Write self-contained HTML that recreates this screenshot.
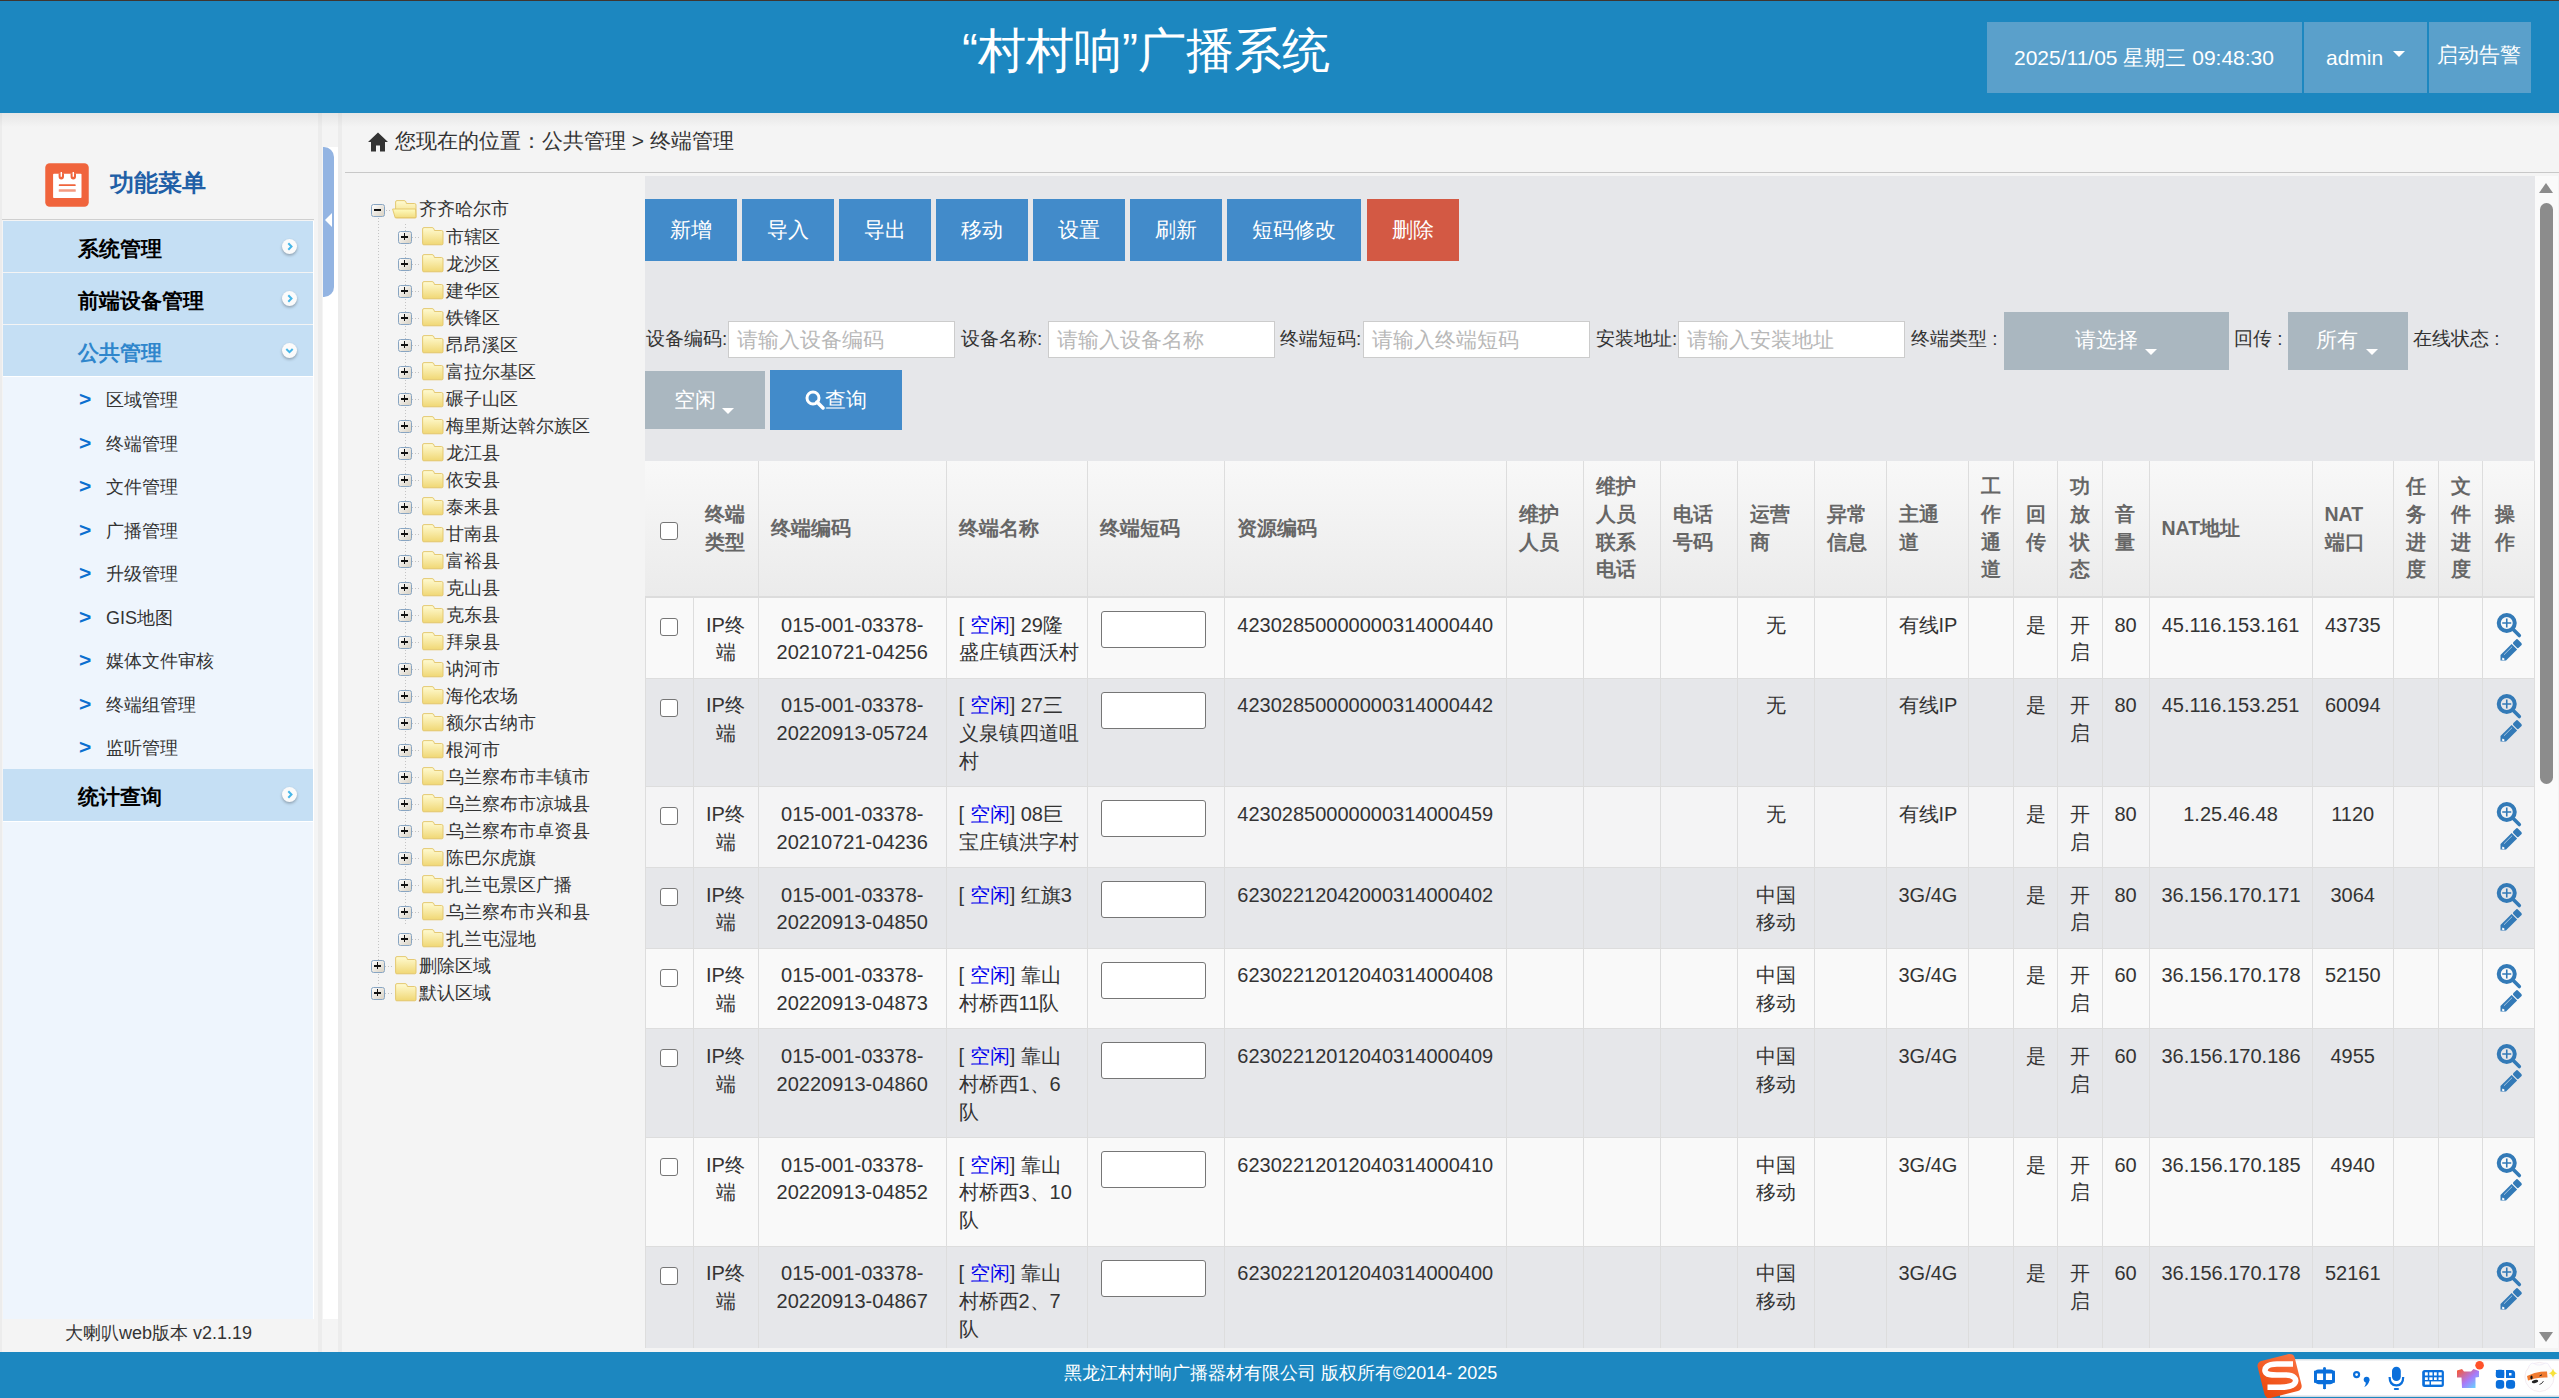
<!DOCTYPE html><html><head><meta charset="utf-8"><style>
*{box-sizing:border-box;margin:0;padding:0}
html,body{width:2559px;height:1398px;overflow:hidden}
body{position:relative;background:#f4f4f4;font-family:"Liberation Sans", sans-serif;color:#333}
.a{position:absolute}
.t{position:absolute;white-space:nowrap}
.mi{position:absolute;left:3px;width:310px;height:51px;background:#c5dff4}
.mi span{position:absolute;left:75px;top:13.5px;font-size:21px;font-weight:bold;color:#000;line-height:27px}
.arr{position:absolute;left:278.5px;top:17.5px;width:15px;height:15px;border-radius:50%;background:#fbfbfb;box-shadow:0 1.5px 3px rgba(0,0,0,.28)}
.sm{position:absolute;left:0;font-size:18px;line-height:22px;color:#333;white-space:nowrap}
.sm b{position:absolute;left:79px;color:#0b6fcf;font-weight:bold;font-size:21px;top:-1px}
.sm i{position:absolute;left:106px;font-style:normal}
.tr{position:absolute;height:27px;font-size:18px;line-height:27px;color:#333;white-space:nowrap}
.pb{position:absolute;width:13.5px;height:13px;border:1.6px solid #88a5c2;border-radius:2.5px;background:linear-gradient(135deg,#fdfdfd,#d9d2c4)}
.pb:before{content:"";position:absolute;left:2px;top:4.4px;width:7px;height:1.8px;background:#111}
.pb.p:after{content:"";position:absolute;left:4.6px;top:1.8px;width:1.8px;height:7px;background:#111}
.fd{position:absolute;width:21px;height:17px}
.btn{position:absolute;top:199px;height:62px;background:#428bca;color:#fff;font-size:21px;line-height:62px;text-align:center}
.lbl{position:absolute;font-size:19px;line-height:28px;color:#333;white-space:nowrap}
.inp{position:absolute;top:321px;height:37px;width:227px;background:#fff;border:1px solid #ccc;font-size:20.5px;line-height:35px;color:#b8b8b8;padding-left:8px;white-space:nowrap}
.sel{position:absolute;background:#aab7c0;color:#fff;font-size:21px;text-align:center}
.caret{position:absolute;width:0;height:0;border-left:6px solid transparent;border-right:6px solid transparent;border-top:6px solid #fff}
.c{position:absolute;border-right:1px solid #ddd;font-size:20px;line-height:27.86px;color:#333;padding:13.5px 12px 0 12px;overflow:hidden;white-space:nowrap}
.h{position:absolute;border-right:1px solid #ddd;white-space:nowrap;font-size:19.5px;line-height:27.86px;color:#666;font-weight:bold;padding:0 12px;display:flex;align-items:center}
.cb{position:absolute;width:18px;height:18px;border:1.5px solid #767676;border-radius:3px;background:#fff}
</style></head><body>
<div class="a" style="left:0;top:0;width:2559px;height:113px;background:#1c87c0"></div>
<div class="a" style="left:0;top:0;width:2559px;height:1px;background:#3f3530"></div>
<div class="t" style="left:962px;top:16px;font-size:48px;line-height:70px;color:#fff">“村村响”广播系统</div>
<div class="a" style="left:1987px;top:22px;width:315px;height:71px;background:#5aa0cb"></div>
<div class="a" style="left:2304px;top:22px;width:123px;height:71px;background:#5aa0cb"></div>
<div class="a" style="left:2429px;top:22px;width:102px;height:71px;background:#5aa0cb"></div>
<div class="t" style="left:2014px;top:44px;font-size:21px;line-height:27px;color:#fff">2025/11/05 星期三 09:48:30</div>
<div class="t" style="left:2326px;top:44px;font-size:21px;line-height:27px;color:#fff">admin</div>
<div class="caret" style="left:2393px;top:51px"></div>
<div class="t" style="left:2437px;top:41px;font-size:21px;line-height:27px;color:#fff">启动告警</div>
<div class="a" style="left:0;top:113px;width:2px;height:1239px;background:#ececec"></div>
<svg class="a" style="left:45px;top:163px" width="44" height="44" viewBox="0 0 44 44"><rect x="0.25" y="0.25" width="43.5" height="43.5" rx="4.5" fill="#f0643c"/><rect x="8.1" y="10.75" width="28.4" height="24.25" rx="0.8" fill="#fff"/><path d="M13.6 10.5 V13.6 Q13.6 16.6 16.3 16.6 Q19 16.6 19 13.6 V10.5 Z M25.6 10.5 V13.6 Q25.6 16.6 28.3 16.6 Q31 16.6 31 13.6 V10.5 Z" fill="#f0643c"/><path d="M16.3 9 V13.8 M28.3 9 V13.8" stroke="#fff" stroke-width="1.4"/><rect x="13.75" y="21.2" width="17" height="1.9" rx="0.9" fill="#f0643c"/><rect x="13.75" y="26.2" width="17" height="2.5" rx="0.5" fill="#f39a80"/></svg>
<div class="t" style="left:110px;top:168px;font-size:24px;line-height:30px;font-weight:bold;color:#1f5fa6">功能菜单</div>
<div class="a" style="left:2px;top:219px;width:312px;height:1px;background:#cfcfcf"></div>
<div class="mi" style="top:221px"><span>系统管理</span><div class="arr"><svg width="15" height="15" style="position:absolute;left:0;top:0"><path d="M6.3 4.2 L9.5 7.5 L6.3 10.8" stroke="#45b6e8" stroke-width="2" fill="none"/></svg></div></div>
<div class="mi" style="top:273px"><span>前端设备管理</span><div class="arr"><svg width="15" height="15" style="position:absolute;left:0;top:0"><path d="M6.3 4.2 L9.5 7.5 L6.3 10.8" stroke="#45b6e8" stroke-width="2" fill="none"/></svg></div></div>
<div class="mi" style="top:325px"><span style="color:#2f86cc">公共管理</span><div class="arr"><svg width="15" height="15" style="position:absolute;left:0;top:0"><path d="M4.3 6 L7.5 9.2 L10.7 6" stroke="#45b6e8" stroke-width="2" fill="none"/></svg></div></div>
<div class="a" style="left:3px;top:377px;width:310px;height:392px;background:#eef5fd"></div>
<div class="sm" style="top:389.0px;width:300px"><b>&gt;</b><i>区域管理</i></div>
<div class="sm" style="top:432.5px;width:300px"><b>&gt;</b><i>终端管理</i></div>
<div class="sm" style="top:476.0px;width:300px"><b>&gt;</b><i>文件管理</i></div>
<div class="sm" style="top:519.5px;width:300px"><b>&gt;</b><i>广播管理</i></div>
<div class="sm" style="top:563.0px;width:300px"><b>&gt;</b><i>升级管理</i></div>
<div class="sm" style="top:606.5px;width:300px"><b>&gt;</b><i>GIS地图</i></div>
<div class="sm" style="top:650.0px;width:300px"><b>&gt;</b><i>媒体文件审核</i></div>
<div class="sm" style="top:693.5px;width:300px"><b>&gt;</b><i>终端组管理</i></div>
<div class="sm" style="top:737.0px;width:300px"><b>&gt;</b><i>监听管理</i></div>
<div class="mi" style="top:769px;height:52px"><span style="top:14px">统计查询</span><div class="arr"><svg width="15" height="15" style="position:absolute;left:0;top:0"><path d="M6.3 4.2 L9.5 7.5 L6.3 10.8" stroke="#45b6e8" stroke-width="2" fill="none"/></svg></div></div>
<div class="a" style="left:3px;top:822px;width:310px;height:497px;background:#eef5fd"></div>
<div class="a" style="left:313px;top:221px;width:1px;height:1098px;background:#fff"></div>
<div class="a" style="left:3px;top:376px;width:311px;height:1px;background:#fff"></div>
<div class="a" style="left:3px;top:821px;width:311px;height:1px;background:#fff"></div>
<div class="t" style="left:65px;top:1321px;font-size:18px;line-height:24px;color:#333">大喇叭web版本 v2.1.19</div>
<div class="a" style="left:318px;top:113px;width:4px;height:1239px;background:#ececec"></div>
<div class="a" style="left:323px;top:147px;width:15px;height:1172px;background:#fff"></div>
<div class="a" style="left:338px;top:113px;width:4px;height:1239px;background:#ececec"></div>
<div class="a" style="left:323px;top:147px;width:11px;height:150px;background:#93b4e2;border-radius:0 10px 10px 0"></div>
<div class="a" style="left:325px;top:213px;width:0;height:0;border-top:7px solid transparent;border-bottom:7px solid transparent;border-right:7px solid #fff"></div>
<div class="a" style="left:0;top:113px;width:2559px;height:14px;background:linear-gradient(rgba(0,0,0,.06),rgba(0,0,0,0))"></div>
<svg class="a" style="left:368px;top:132px" width="20" height="20" viewBox="0 0 20 20"><path d="M10 0.5 L0 10 L3 10 L3 19.5 L8 19.5 L8 13.5 L12 13.5 L12 19.5 L17 19.5 L17 10 L20 10 Z" fill="#333"/></svg>
<div class="t" style="left:395px;top:127px;font-size:21px;line-height:28px;color:#333">您现在的位置：公共管理 &gt; 终端管理</div>
<div class="a" style="left:345px;top:172px;width:2214px;height:1px;background:#c8c8c8"></div>
<svg width="0" height="0" style="position:absolute"><defs><linearGradient id="fg" x1="0" y1="0" x2="0" y2="1"><stop offset="0" stop-color="#fffbd2"/><stop offset="1" stop-color="#f0d774"/></linearGradient><linearGradient id="fg2" x1="0" y1="0" x2="0" y2="1"><stop offset="0" stop-color="#fffcc0"/><stop offset="1" stop-color="#f2dc80"/></linearGradient></defs></svg>
<div class="pb" style="left:371px;top:203.5px"></div>
<div class="a" style="left:386px;top:210px;width:6px;height:1px;background:repeating-linear-gradient(90deg,#c4c4c4 0 1px,transparent 1px 3px)"></div>
<svg class="a" style="left:391.5px;top:199.5px" width="25" height="19" viewBox="0 0 25 19"><path d="M3.6 2 Q3.6 0.6 5 0.6 L12 0.6 Q13.5 0.6 14 2 L14.4 3.5 L22.6 3.5 Q24 3.5 24 5 L24 16.6 Q24 17.8 22.8 17.8 L4.8 17.8 Q3.6 17.8 3.6 16.6 Z" fill="url(#fg)" stroke="#e2c466" stroke-width="0.9"/><path d="M0.6 9 L23.6 9 L24 17.8 L3.2 17.8 Z" fill="url(#fg2)" stroke="#e2c466" stroke-width="0.9"/></svg>
<div class="tr" style="left:419px;top:196px">齐齐哈尔市</div>
<div class="a" style="left:378px;top:218px;width:1px;height:767px;background:repeating-linear-gradient(180deg,#c4c4c4 0 1px,transparent 1px 3px)"></div>
<div class="a" style="left:404.5px;top:224px;width:1px;height:700px;background:repeating-linear-gradient(180deg,#c4c4c4 0 1px,transparent 1px 3px)"></div>
<div class="pb p" style="left:398px;top:230.5px"></div>
<div class="a" style="left:412px;top:237px;width:7px;height:1px;background:repeating-linear-gradient(90deg,#c4c4c4 0 1px,transparent 1px 3px)"></div>
<svg class="a" style="left:421.5px;top:226.5px" width="22" height="19" viewBox="0 0 22 19"><path d="M0.6 2 Q0.6 0.6 2 0.6 L10 0.6 Q11.5 0.6 12 2 L12.4 3.5 L19.6 3.5 Q21 3.5 21 5 L21 16.6 Q21 17.8 19.8 17.8 L1.8 17.8 Q0.6 17.8 0.6 16.6 Z" fill="url(#fg)" stroke="#e2c466" stroke-width="0.9"/></svg>
<div class="tr" style="left:446px;top:224px">市辖区</div>
<div class="pb p" style="left:398px;top:257.5px"></div>
<div class="a" style="left:412px;top:264px;width:7px;height:1px;background:repeating-linear-gradient(90deg,#c4c4c4 0 1px,transparent 1px 3px)"></div>
<svg class="a" style="left:421.5px;top:253.5px" width="22" height="19" viewBox="0 0 22 19"><path d="M0.6 2 Q0.6 0.6 2 0.6 L10 0.6 Q11.5 0.6 12 2 L12.4 3.5 L19.6 3.5 Q21 3.5 21 5 L21 16.6 Q21 17.8 19.8 17.8 L1.8 17.8 Q0.6 17.8 0.6 16.6 Z" fill="url(#fg)" stroke="#e2c466" stroke-width="0.9"/></svg>
<div class="tr" style="left:446px;top:251px">龙沙区</div>
<div class="pb p" style="left:398px;top:284.5px"></div>
<div class="a" style="left:412px;top:291px;width:7px;height:1px;background:repeating-linear-gradient(90deg,#c4c4c4 0 1px,transparent 1px 3px)"></div>
<svg class="a" style="left:421.5px;top:280.5px" width="22" height="19" viewBox="0 0 22 19"><path d="M0.6 2 Q0.6 0.6 2 0.6 L10 0.6 Q11.5 0.6 12 2 L12.4 3.5 L19.6 3.5 Q21 3.5 21 5 L21 16.6 Q21 17.8 19.8 17.8 L1.8 17.8 Q0.6 17.8 0.6 16.6 Z" fill="url(#fg)" stroke="#e2c466" stroke-width="0.9"/></svg>
<div class="tr" style="left:446px;top:278px">建华区</div>
<div class="pb p" style="left:398px;top:311.5px"></div>
<div class="a" style="left:412px;top:318px;width:7px;height:1px;background:repeating-linear-gradient(90deg,#c4c4c4 0 1px,transparent 1px 3px)"></div>
<svg class="a" style="left:421.5px;top:307.5px" width="22" height="19" viewBox="0 0 22 19"><path d="M0.6 2 Q0.6 0.6 2 0.6 L10 0.6 Q11.5 0.6 12 2 L12.4 3.5 L19.6 3.5 Q21 3.5 21 5 L21 16.6 Q21 17.8 19.8 17.8 L1.8 17.8 Q0.6 17.8 0.6 16.6 Z" fill="url(#fg)" stroke="#e2c466" stroke-width="0.9"/></svg>
<div class="tr" style="left:446px;top:305px">铁锋区</div>
<div class="pb p" style="left:398px;top:338.5px"></div>
<div class="a" style="left:412px;top:345px;width:7px;height:1px;background:repeating-linear-gradient(90deg,#c4c4c4 0 1px,transparent 1px 3px)"></div>
<svg class="a" style="left:421.5px;top:334.5px" width="22" height="19" viewBox="0 0 22 19"><path d="M0.6 2 Q0.6 0.6 2 0.6 L10 0.6 Q11.5 0.6 12 2 L12.4 3.5 L19.6 3.5 Q21 3.5 21 5 L21 16.6 Q21 17.8 19.8 17.8 L1.8 17.8 Q0.6 17.8 0.6 16.6 Z" fill="url(#fg)" stroke="#e2c466" stroke-width="0.9"/></svg>
<div class="tr" style="left:446px;top:332px">昂昂溪区</div>
<div class="pb p" style="left:398px;top:365.5px"></div>
<div class="a" style="left:412px;top:372px;width:7px;height:1px;background:repeating-linear-gradient(90deg,#c4c4c4 0 1px,transparent 1px 3px)"></div>
<svg class="a" style="left:421.5px;top:361.5px" width="22" height="19" viewBox="0 0 22 19"><path d="M0.6 2 Q0.6 0.6 2 0.6 L10 0.6 Q11.5 0.6 12 2 L12.4 3.5 L19.6 3.5 Q21 3.5 21 5 L21 16.6 Q21 17.8 19.8 17.8 L1.8 17.8 Q0.6 17.8 0.6 16.6 Z" fill="url(#fg)" stroke="#e2c466" stroke-width="0.9"/></svg>
<div class="tr" style="left:446px;top:359px">富拉尔基区</div>
<div class="pb p" style="left:398px;top:392.5px"></div>
<div class="a" style="left:412px;top:399px;width:7px;height:1px;background:repeating-linear-gradient(90deg,#c4c4c4 0 1px,transparent 1px 3px)"></div>
<svg class="a" style="left:421.5px;top:388.5px" width="22" height="19" viewBox="0 0 22 19"><path d="M0.6 2 Q0.6 0.6 2 0.6 L10 0.6 Q11.5 0.6 12 2 L12.4 3.5 L19.6 3.5 Q21 3.5 21 5 L21 16.6 Q21 17.8 19.8 17.8 L1.8 17.8 Q0.6 17.8 0.6 16.6 Z" fill="url(#fg)" stroke="#e2c466" stroke-width="0.9"/></svg>
<div class="tr" style="left:446px;top:386px">碾子山区</div>
<div class="pb p" style="left:398px;top:419.5px"></div>
<div class="a" style="left:412px;top:426px;width:7px;height:1px;background:repeating-linear-gradient(90deg,#c4c4c4 0 1px,transparent 1px 3px)"></div>
<svg class="a" style="left:421.5px;top:415.5px" width="22" height="19" viewBox="0 0 22 19"><path d="M0.6 2 Q0.6 0.6 2 0.6 L10 0.6 Q11.5 0.6 12 2 L12.4 3.5 L19.6 3.5 Q21 3.5 21 5 L21 16.6 Q21 17.8 19.8 17.8 L1.8 17.8 Q0.6 17.8 0.6 16.6 Z" fill="url(#fg)" stroke="#e2c466" stroke-width="0.9"/></svg>
<div class="tr" style="left:446px;top:413px">梅里斯达斡尔族区</div>
<div class="pb p" style="left:398px;top:446.5px"></div>
<div class="a" style="left:412px;top:453px;width:7px;height:1px;background:repeating-linear-gradient(90deg,#c4c4c4 0 1px,transparent 1px 3px)"></div>
<svg class="a" style="left:421.5px;top:442.5px" width="22" height="19" viewBox="0 0 22 19"><path d="M0.6 2 Q0.6 0.6 2 0.6 L10 0.6 Q11.5 0.6 12 2 L12.4 3.5 L19.6 3.5 Q21 3.5 21 5 L21 16.6 Q21 17.8 19.8 17.8 L1.8 17.8 Q0.6 17.8 0.6 16.6 Z" fill="url(#fg)" stroke="#e2c466" stroke-width="0.9"/></svg>
<div class="tr" style="left:446px;top:440px">龙江县</div>
<div class="pb p" style="left:398px;top:473.5px"></div>
<div class="a" style="left:412px;top:480px;width:7px;height:1px;background:repeating-linear-gradient(90deg,#c4c4c4 0 1px,transparent 1px 3px)"></div>
<svg class="a" style="left:421.5px;top:469.5px" width="22" height="19" viewBox="0 0 22 19"><path d="M0.6 2 Q0.6 0.6 2 0.6 L10 0.6 Q11.5 0.6 12 2 L12.4 3.5 L19.6 3.5 Q21 3.5 21 5 L21 16.6 Q21 17.8 19.8 17.8 L1.8 17.8 Q0.6 17.8 0.6 16.6 Z" fill="url(#fg)" stroke="#e2c466" stroke-width="0.9"/></svg>
<div class="tr" style="left:446px;top:467px">依安县</div>
<div class="pb p" style="left:398px;top:500.5px"></div>
<div class="a" style="left:412px;top:507px;width:7px;height:1px;background:repeating-linear-gradient(90deg,#c4c4c4 0 1px,transparent 1px 3px)"></div>
<svg class="a" style="left:421.5px;top:496.5px" width="22" height="19" viewBox="0 0 22 19"><path d="M0.6 2 Q0.6 0.6 2 0.6 L10 0.6 Q11.5 0.6 12 2 L12.4 3.5 L19.6 3.5 Q21 3.5 21 5 L21 16.6 Q21 17.8 19.8 17.8 L1.8 17.8 Q0.6 17.8 0.6 16.6 Z" fill="url(#fg)" stroke="#e2c466" stroke-width="0.9"/></svg>
<div class="tr" style="left:446px;top:494px">泰来县</div>
<div class="pb p" style="left:398px;top:527.5px"></div>
<div class="a" style="left:412px;top:534px;width:7px;height:1px;background:repeating-linear-gradient(90deg,#c4c4c4 0 1px,transparent 1px 3px)"></div>
<svg class="a" style="left:421.5px;top:523.5px" width="22" height="19" viewBox="0 0 22 19"><path d="M0.6 2 Q0.6 0.6 2 0.6 L10 0.6 Q11.5 0.6 12 2 L12.4 3.5 L19.6 3.5 Q21 3.5 21 5 L21 16.6 Q21 17.8 19.8 17.8 L1.8 17.8 Q0.6 17.8 0.6 16.6 Z" fill="url(#fg)" stroke="#e2c466" stroke-width="0.9"/></svg>
<div class="tr" style="left:446px;top:521px">甘南县</div>
<div class="pb p" style="left:398px;top:554.5px"></div>
<div class="a" style="left:412px;top:561px;width:7px;height:1px;background:repeating-linear-gradient(90deg,#c4c4c4 0 1px,transparent 1px 3px)"></div>
<svg class="a" style="left:421.5px;top:550.5px" width="22" height="19" viewBox="0 0 22 19"><path d="M0.6 2 Q0.6 0.6 2 0.6 L10 0.6 Q11.5 0.6 12 2 L12.4 3.5 L19.6 3.5 Q21 3.5 21 5 L21 16.6 Q21 17.8 19.8 17.8 L1.8 17.8 Q0.6 17.8 0.6 16.6 Z" fill="url(#fg)" stroke="#e2c466" stroke-width="0.9"/></svg>
<div class="tr" style="left:446px;top:548px">富裕县</div>
<div class="pb p" style="left:398px;top:581.5px"></div>
<div class="a" style="left:412px;top:588px;width:7px;height:1px;background:repeating-linear-gradient(90deg,#c4c4c4 0 1px,transparent 1px 3px)"></div>
<svg class="a" style="left:421.5px;top:577.5px" width="22" height="19" viewBox="0 0 22 19"><path d="M0.6 2 Q0.6 0.6 2 0.6 L10 0.6 Q11.5 0.6 12 2 L12.4 3.5 L19.6 3.5 Q21 3.5 21 5 L21 16.6 Q21 17.8 19.8 17.8 L1.8 17.8 Q0.6 17.8 0.6 16.6 Z" fill="url(#fg)" stroke="#e2c466" stroke-width="0.9"/></svg>
<div class="tr" style="left:446px;top:575px">克山县</div>
<div class="pb p" style="left:398px;top:608.5px"></div>
<div class="a" style="left:412px;top:615px;width:7px;height:1px;background:repeating-linear-gradient(90deg,#c4c4c4 0 1px,transparent 1px 3px)"></div>
<svg class="a" style="left:421.5px;top:604.5px" width="22" height="19" viewBox="0 0 22 19"><path d="M0.6 2 Q0.6 0.6 2 0.6 L10 0.6 Q11.5 0.6 12 2 L12.4 3.5 L19.6 3.5 Q21 3.5 21 5 L21 16.6 Q21 17.8 19.8 17.8 L1.8 17.8 Q0.6 17.8 0.6 16.6 Z" fill="url(#fg)" stroke="#e2c466" stroke-width="0.9"/></svg>
<div class="tr" style="left:446px;top:602px">克东县</div>
<div class="pb p" style="left:398px;top:635.5px"></div>
<div class="a" style="left:412px;top:642px;width:7px;height:1px;background:repeating-linear-gradient(90deg,#c4c4c4 0 1px,transparent 1px 3px)"></div>
<svg class="a" style="left:421.5px;top:631.5px" width="22" height="19" viewBox="0 0 22 19"><path d="M0.6 2 Q0.6 0.6 2 0.6 L10 0.6 Q11.5 0.6 12 2 L12.4 3.5 L19.6 3.5 Q21 3.5 21 5 L21 16.6 Q21 17.8 19.8 17.8 L1.8 17.8 Q0.6 17.8 0.6 16.6 Z" fill="url(#fg)" stroke="#e2c466" stroke-width="0.9"/></svg>
<div class="tr" style="left:446px;top:629px">拜泉县</div>
<div class="pb p" style="left:398px;top:662.5px"></div>
<div class="a" style="left:412px;top:669px;width:7px;height:1px;background:repeating-linear-gradient(90deg,#c4c4c4 0 1px,transparent 1px 3px)"></div>
<svg class="a" style="left:421.5px;top:658.5px" width="22" height="19" viewBox="0 0 22 19"><path d="M0.6 2 Q0.6 0.6 2 0.6 L10 0.6 Q11.5 0.6 12 2 L12.4 3.5 L19.6 3.5 Q21 3.5 21 5 L21 16.6 Q21 17.8 19.8 17.8 L1.8 17.8 Q0.6 17.8 0.6 16.6 Z" fill="url(#fg)" stroke="#e2c466" stroke-width="0.9"/></svg>
<div class="tr" style="left:446px;top:656px">讷河市</div>
<div class="pb p" style="left:398px;top:689.5px"></div>
<div class="a" style="left:412px;top:696px;width:7px;height:1px;background:repeating-linear-gradient(90deg,#c4c4c4 0 1px,transparent 1px 3px)"></div>
<svg class="a" style="left:421.5px;top:685.5px" width="22" height="19" viewBox="0 0 22 19"><path d="M0.6 2 Q0.6 0.6 2 0.6 L10 0.6 Q11.5 0.6 12 2 L12.4 3.5 L19.6 3.5 Q21 3.5 21 5 L21 16.6 Q21 17.8 19.8 17.8 L1.8 17.8 Q0.6 17.8 0.6 16.6 Z" fill="url(#fg)" stroke="#e2c466" stroke-width="0.9"/></svg>
<div class="tr" style="left:446px;top:683px">海伦农场</div>
<div class="pb p" style="left:398px;top:716.5px"></div>
<div class="a" style="left:412px;top:723px;width:7px;height:1px;background:repeating-linear-gradient(90deg,#c4c4c4 0 1px,transparent 1px 3px)"></div>
<svg class="a" style="left:421.5px;top:712.5px" width="22" height="19" viewBox="0 0 22 19"><path d="M0.6 2 Q0.6 0.6 2 0.6 L10 0.6 Q11.5 0.6 12 2 L12.4 3.5 L19.6 3.5 Q21 3.5 21 5 L21 16.6 Q21 17.8 19.8 17.8 L1.8 17.8 Q0.6 17.8 0.6 16.6 Z" fill="url(#fg)" stroke="#e2c466" stroke-width="0.9"/></svg>
<div class="tr" style="left:446px;top:710px">额尔古纳市</div>
<div class="pb p" style="left:398px;top:743.5px"></div>
<div class="a" style="left:412px;top:750px;width:7px;height:1px;background:repeating-linear-gradient(90deg,#c4c4c4 0 1px,transparent 1px 3px)"></div>
<svg class="a" style="left:421.5px;top:739.5px" width="22" height="19" viewBox="0 0 22 19"><path d="M0.6 2 Q0.6 0.6 2 0.6 L10 0.6 Q11.5 0.6 12 2 L12.4 3.5 L19.6 3.5 Q21 3.5 21 5 L21 16.6 Q21 17.8 19.8 17.8 L1.8 17.8 Q0.6 17.8 0.6 16.6 Z" fill="url(#fg)" stroke="#e2c466" stroke-width="0.9"/></svg>
<div class="tr" style="left:446px;top:737px">根河市</div>
<div class="pb p" style="left:398px;top:770.5px"></div>
<div class="a" style="left:412px;top:777px;width:7px;height:1px;background:repeating-linear-gradient(90deg,#c4c4c4 0 1px,transparent 1px 3px)"></div>
<svg class="a" style="left:421.5px;top:766.5px" width="22" height="19" viewBox="0 0 22 19"><path d="M0.6 2 Q0.6 0.6 2 0.6 L10 0.6 Q11.5 0.6 12 2 L12.4 3.5 L19.6 3.5 Q21 3.5 21 5 L21 16.6 Q21 17.8 19.8 17.8 L1.8 17.8 Q0.6 17.8 0.6 16.6 Z" fill="url(#fg)" stroke="#e2c466" stroke-width="0.9"/></svg>
<div class="tr" style="left:446px;top:764px">乌兰察布市丰镇市</div>
<div class="pb p" style="left:398px;top:797.5px"></div>
<div class="a" style="left:412px;top:804px;width:7px;height:1px;background:repeating-linear-gradient(90deg,#c4c4c4 0 1px,transparent 1px 3px)"></div>
<svg class="a" style="left:421.5px;top:793.5px" width="22" height="19" viewBox="0 0 22 19"><path d="M0.6 2 Q0.6 0.6 2 0.6 L10 0.6 Q11.5 0.6 12 2 L12.4 3.5 L19.6 3.5 Q21 3.5 21 5 L21 16.6 Q21 17.8 19.8 17.8 L1.8 17.8 Q0.6 17.8 0.6 16.6 Z" fill="url(#fg)" stroke="#e2c466" stroke-width="0.9"/></svg>
<div class="tr" style="left:446px;top:791px">乌兰察布市凉城县</div>
<div class="pb p" style="left:398px;top:824.5px"></div>
<div class="a" style="left:412px;top:831px;width:7px;height:1px;background:repeating-linear-gradient(90deg,#c4c4c4 0 1px,transparent 1px 3px)"></div>
<svg class="a" style="left:421.5px;top:820.5px" width="22" height="19" viewBox="0 0 22 19"><path d="M0.6 2 Q0.6 0.6 2 0.6 L10 0.6 Q11.5 0.6 12 2 L12.4 3.5 L19.6 3.5 Q21 3.5 21 5 L21 16.6 Q21 17.8 19.8 17.8 L1.8 17.8 Q0.6 17.8 0.6 16.6 Z" fill="url(#fg)" stroke="#e2c466" stroke-width="0.9"/></svg>
<div class="tr" style="left:446px;top:818px">乌兰察布市卓资县</div>
<div class="pb p" style="left:398px;top:851.5px"></div>
<div class="a" style="left:412px;top:858px;width:7px;height:1px;background:repeating-linear-gradient(90deg,#c4c4c4 0 1px,transparent 1px 3px)"></div>
<svg class="a" style="left:421.5px;top:847.5px" width="22" height="19" viewBox="0 0 22 19"><path d="M0.6 2 Q0.6 0.6 2 0.6 L10 0.6 Q11.5 0.6 12 2 L12.4 3.5 L19.6 3.5 Q21 3.5 21 5 L21 16.6 Q21 17.8 19.8 17.8 L1.8 17.8 Q0.6 17.8 0.6 16.6 Z" fill="url(#fg)" stroke="#e2c466" stroke-width="0.9"/></svg>
<div class="tr" style="left:446px;top:845px">陈巴尔虎旗</div>
<div class="pb p" style="left:398px;top:878.5px"></div>
<div class="a" style="left:412px;top:885px;width:7px;height:1px;background:repeating-linear-gradient(90deg,#c4c4c4 0 1px,transparent 1px 3px)"></div>
<svg class="a" style="left:421.5px;top:874.5px" width="22" height="19" viewBox="0 0 22 19"><path d="M0.6 2 Q0.6 0.6 2 0.6 L10 0.6 Q11.5 0.6 12 2 L12.4 3.5 L19.6 3.5 Q21 3.5 21 5 L21 16.6 Q21 17.8 19.8 17.8 L1.8 17.8 Q0.6 17.8 0.6 16.6 Z" fill="url(#fg)" stroke="#e2c466" stroke-width="0.9"/></svg>
<div class="tr" style="left:446px;top:872px">扎兰屯景区广播</div>
<div class="pb p" style="left:398px;top:905.5px"></div>
<div class="a" style="left:412px;top:912px;width:7px;height:1px;background:repeating-linear-gradient(90deg,#c4c4c4 0 1px,transparent 1px 3px)"></div>
<svg class="a" style="left:421.5px;top:901.5px" width="22" height="19" viewBox="0 0 22 19"><path d="M0.6 2 Q0.6 0.6 2 0.6 L10 0.6 Q11.5 0.6 12 2 L12.4 3.5 L19.6 3.5 Q21 3.5 21 5 L21 16.6 Q21 17.8 19.8 17.8 L1.8 17.8 Q0.6 17.8 0.6 16.6 Z" fill="url(#fg)" stroke="#e2c466" stroke-width="0.9"/></svg>
<div class="tr" style="left:446px;top:899px">乌兰察布市兴和县</div>
<div class="pb p" style="left:398px;top:932.5px"></div>
<div class="a" style="left:412px;top:939px;width:7px;height:1px;background:repeating-linear-gradient(90deg,#c4c4c4 0 1px,transparent 1px 3px)"></div>
<svg class="a" style="left:421.5px;top:928.5px" width="22" height="19" viewBox="0 0 22 19"><path d="M0.6 2 Q0.6 0.6 2 0.6 L10 0.6 Q11.5 0.6 12 2 L12.4 3.5 L19.6 3.5 Q21 3.5 21 5 L21 16.6 Q21 17.8 19.8 17.8 L1.8 17.8 Q0.6 17.8 0.6 16.6 Z" fill="url(#fg)" stroke="#e2c466" stroke-width="0.9"/></svg>
<div class="tr" style="left:446px;top:926px">扎兰屯湿地</div>
<div class="pb p" style="left:371px;top:959.5px"></div>
<div class="a" style="left:385px;top:966px;width:7px;height:1px;background:repeating-linear-gradient(90deg,#c4c4c4 0 1px,transparent 1px 3px)"></div>
<svg class="a" style="left:394.5px;top:955.5px" width="22" height="19" viewBox="0 0 22 19"><path d="M0.6 2 Q0.6 0.6 2 0.6 L10 0.6 Q11.5 0.6 12 2 L12.4 3.5 L19.6 3.5 Q21 3.5 21 5 L21 16.6 Q21 17.8 19.8 17.8 L1.8 17.8 Q0.6 17.8 0.6 16.6 Z" fill="url(#fg)" stroke="#e2c466" stroke-width="0.9"/></svg>
<div class="tr" style="left:419px;top:953px">删除区域</div>
<div class="pb p" style="left:371px;top:986.5px"></div>
<div class="a" style="left:385px;top:993px;width:7px;height:1px;background:repeating-linear-gradient(90deg,#c4c4c4 0 1px,transparent 1px 3px)"></div>
<svg class="a" style="left:394.5px;top:982.5px" width="22" height="19" viewBox="0 0 22 19"><path d="M0.6 2 Q0.6 0.6 2 0.6 L10 0.6 Q11.5 0.6 12 2 L12.4 3.5 L19.6 3.5 Q21 3.5 21 5 L21 16.6 Q21 17.8 19.8 17.8 L1.8 17.8 Q0.6 17.8 0.6 16.6 Z" fill="url(#fg)" stroke="#e2c466" stroke-width="0.9"/></svg>
<div class="tr" style="left:419px;top:980px">默认区域</div>
<div class="a" style="left:645px;top:176px;width:1890px;height:1172px;background:#e6e7ea"></div>
<div class="btn" style="left:645px;width:92px">新增</div>
<div class="btn" style="left:742px;width:92px">导入</div>
<div class="btn" style="left:839px;width:92px">导出</div>
<div class="btn" style="left:936px;width:92px">移动</div>
<div class="btn" style="left:1033px;width:92px">设置</div>
<div class="btn" style="left:1130px;width:92px">刷新</div>
<div class="btn" style="left:1227px;width:134px">短码修改</div>
<div class="btn" style="left:1367px;width:92px;background:#d35944">删除</div>
<div class="lbl" style="left:646px;top:325px">设备编码:</div>
<div class="inp" style="left:728px">请输入设备编码</div>
<div class="lbl" style="left:961px;top:325px">设备名称:</div>
<div class="inp" style="left:1048px">请输入设备名称</div>
<div class="lbl" style="left:1280px;top:325px">终端短码:</div>
<div class="inp" style="left:1363px">请输入终端短码</div>
<div class="lbl" style="left:1596px;top:325px">安装地址:</div>
<div class="inp" style="left:1678px">请输入安装地址</div>
<div class="lbl" style="left:1911px;top:325px">终端类型 :</div>
<div class="sel" style="left:2004px;top:312px;width:225px;height:58px"></div>
<div class="t" style="left:2075px;top:326px;font-size:21px;line-height:28px;color:#fff">请选择</div>
<div class="caret" style="left:2145px;top:349px"></div>
<div class="lbl" style="left:2234px;top:325px">回传 :</div>
<div class="sel" style="left:2288px;top:312px;width:120px;height:58px"></div>
<div class="t" style="left:2316px;top:326px;font-size:21px;line-height:28px;color:#fff">所有</div>
<div class="caret" style="left:2366px;top:349px"></div>
<div class="lbl" style="left:2413px;top:325px">在线状态 :</div>
<div class="sel" style="left:645px;top:371px;width:120px;height:58px"></div>
<div class="t" style="left:674px;top:386px;font-size:21px;line-height:28px;color:#fff">空闲</div>
<div class="caret" style="left:722px;top:408px"></div>
<div class="btn" style="left:770px;top:370px;width:132px;height:60px;line-height:60px"><svg width="20" height="20" viewBox="0 0 20 20" style="vertical-align:-3px"><circle cx="8" cy="8" r="6" stroke="#fff" stroke-width="3" fill="none"/><path d="M12 12 L18 18" stroke="#fff" stroke-width="3.5" stroke-linecap="round"/></svg>查询</div>
<div class="a" style="left:645px;top:461px;width:1890px;height:135px;background:linear-gradient(#f8f8f8,#ebebeb)"></div>
<div class="cb" style="left:660px;top:522px"></div>
<div class="h" style="left:693px;top:461px;width:66px;height:135px;">终端<br>类型</div>
<div class="h" style="left:759px;top:461px;width:187.5px;height:135px;">终端编码</div>
<div class="h" style="left:946.5px;top:461px;width:141.5px;height:135px;">终端名称</div>
<div class="h" style="left:1088px;top:461px;width:137px;height:135px;">终端短码</div>
<div class="h" style="left:1225px;top:461px;width:281.5px;height:135px;">资源编码</div>
<div class="h" style="left:1506.5px;top:461px;width:77.0px;height:135px;">维护<br>人员</div>
<div class="h" style="left:1583.5px;top:461px;width:77.0px;height:135px;">维护<br>人员<br>联系<br>电话</div>
<div class="h" style="left:1660.5px;top:461px;width:77.0px;height:135px;">电话<br>号码</div>
<div class="h" style="left:1737.5px;top:461px;width:77.0px;height:135px;">运营<br>商</div>
<div class="h" style="left:1814.5px;top:461px;width:72.0px;height:135px;">异常<br>信息</div>
<div class="h" style="left:1886.5px;top:461px;width:82.0px;height:135px;">主通<br>道</div>
<div class="h" style="left:1968.5px;top:461px;width:45.0px;height:135px;">工<br>作<br>通<br>道</div>
<div class="h" style="left:2013.5px;top:461px;width:44.5px;height:135px;">回<br>传</div>
<div class="h" style="left:2058px;top:461px;width:44.5px;height:135px;">功<br>放<br>状<br>态</div>
<div class="h" style="left:2102.5px;top:461px;width:47.0px;height:135px;">音<br>量</div>
<div class="h" style="left:2149.5px;top:461px;width:163.0px;height:135px;">NAT地址</div>
<div class="h" style="left:2312.5px;top:461px;width:81.5px;height:135px;">NAT<br>端口</div>
<div class="h" style="left:2394px;top:461px;width:44.5px;height:135px;">任<br>务<br>进<br>度</div>
<div class="h" style="left:2438.5px;top:461px;width:44.0px;height:135px;">文<br>件<br>进<br>度</div>
<div class="h" style="left:2482.5px;top:461px;width:52.5px;height:135px;">操<br>作</div>
<div class="a" style="left:645px;top:596px;width:1890px;height:2px;background:#dcdcdc"></div>
<div class="a" style="left:645px;top:598.00px;width:1890px;height:80.72px;background:#f9f9f9;border-bottom:1px solid #ddd"></div>
<div class="cb" style="left:660px;top:618.00px"></div>
<div class="a" style="left:645px;top:598.00px;width:1px;height:80.72px;background:#ddd"></div>
<div class="a" style="left:693px;top:598.00px;width:1px;height:80.72px;background:#ddd"></div>
<div class="c" style="left:693px;top:598.00px;width:66px;height:80.72px;text-align:center">IP终<br>端</div>
<div class="c" style="left:759px;top:598.00px;width:187.5px;height:80.72px;text-align:center">015-001-03378-<br>20210721-04256</div>
<div class="c" style="left:946.5px;top:598.00px;width:141.5px;height:80.72px;text-align:left">[ <span style="color:#0000ee">空闲</span>] 29隆<br>盛庄镇西沃村</div>
<div class="c" style="left:1088px;top:598.00px;width:137px;height:80.72px"></div>
<div class="a" style="left:1101px;top:611.00px;width:105px;height:37px;background:#fff;border:1px solid #767676;border-radius:3px"></div>
<div class="c" style="left:1225px;top:598.00px;width:281.5px;height:80.72px;text-align:center">42302850000000314000440</div>
<div class="c" style="left:1506.5px;top:598.00px;width:77.0px;height:80.72px;text-align:center"></div>
<div class="c" style="left:1583.5px;top:598.00px;width:77.0px;height:80.72px;text-align:center"></div>
<div class="c" style="left:1660.5px;top:598.00px;width:77.0px;height:80.72px;text-align:center"></div>
<div class="c" style="left:1737.5px;top:598.00px;width:77.0px;height:80.72px;text-align:center">无</div>
<div class="c" style="left:1814.5px;top:598.00px;width:72.0px;height:80.72px;text-align:center"></div>
<div class="c" style="left:1886.5px;top:598.00px;width:82.0px;height:80.72px;text-align:center">有线IP</div>
<div class="c" style="left:1968.5px;top:598.00px;width:45.0px;height:80.72px;text-align:center"></div>
<div class="c" style="left:2013.5px;top:598.00px;width:44.5px;height:80.72px;text-align:center">是</div>
<div class="c" style="left:2058px;top:598.00px;width:44.5px;height:80.72px;text-align:center">开<br>启</div>
<div class="c" style="left:2102.5px;top:598.00px;width:47.0px;height:80.72px;text-align:center">80</div>
<div class="c" style="left:2149.5px;top:598.00px;width:163.0px;height:80.72px;text-align:center">45.116.153.161</div>
<div class="c" style="left:2312.5px;top:598.00px;width:81.5px;height:80.72px;text-align:center">43735</div>
<div class="c" style="left:2394px;top:598.00px;width:44.5px;height:80.72px;text-align:center"></div>
<div class="c" style="left:2438.5px;top:598.00px;width:44.0px;height:80.72px;text-align:center"></div>
<div class="c" style="left:2482.5px;top:598.00px;width:52.5px;height:80.72px"></div>
<svg class="a" style="left:2493px;top:606.00px" width="34" height="60" viewBox="0 0 34 60"><circle cx="13.75" cy="17" r="8" stroke="#337ab7" stroke-width="4" fill="none"/><path d="M13.75 12.5 V21.5 M9.25 17 H18.25" stroke="#337ab7" stroke-width="1.6"/><path d="M20.3 23.6 L26.3 29.6" stroke="#337ab7" stroke-width="3.6" stroke-linecap="round"/><g transform="translate(7.5 54.5) rotate(-45)"><path d="M0 0 L3.9 -3.9 L19.6 -3.9 L19.6 3.9 L3.9 3.9 Z" fill="#337ab7"/><rect x="20.6" y="-3.9" width="6.6" height="7.8" rx="1.6" fill="#337ab7"/><path d="M6.5 -1.6 H18" stroke="#cfe0f0" stroke-width="0.7"/><path d="M1.6 0.2 L3.6 -0.6 L4.2 1.6 L2.6 2.4 Z" fill="#fff"/></g></svg>
<div class="a" style="left:645px;top:678.72px;width:1890px;height:108.58px;background:#e6e7ea;border-bottom:1px solid #ddd"></div>
<div class="cb" style="left:660px;top:698.72px"></div>
<div class="a" style="left:645px;top:678.72px;width:1px;height:108.58px;background:#ddd"></div>
<div class="a" style="left:693px;top:678.72px;width:1px;height:108.58px;background:#ddd"></div>
<div class="c" style="left:693px;top:678.72px;width:66px;height:108.58px;text-align:center">IP终<br>端</div>
<div class="c" style="left:759px;top:678.72px;width:187.5px;height:108.58px;text-align:center">015-001-03378-<br>20220913-05724</div>
<div class="c" style="left:946.5px;top:678.72px;width:141.5px;height:108.58px;text-align:left">[ <span style="color:#0000ee">空闲</span>] 27三<br>义泉镇四道咀<br>村</div>
<div class="c" style="left:1088px;top:678.72px;width:137px;height:108.58px"></div>
<div class="a" style="left:1101px;top:691.72px;width:105px;height:37px;background:#fff;border:1px solid #767676;border-radius:3px"></div>
<div class="c" style="left:1225px;top:678.72px;width:281.5px;height:108.58px;text-align:center">42302850000000314000442</div>
<div class="c" style="left:1506.5px;top:678.72px;width:77.0px;height:108.58px;text-align:center"></div>
<div class="c" style="left:1583.5px;top:678.72px;width:77.0px;height:108.58px;text-align:center"></div>
<div class="c" style="left:1660.5px;top:678.72px;width:77.0px;height:108.58px;text-align:center"></div>
<div class="c" style="left:1737.5px;top:678.72px;width:77.0px;height:108.58px;text-align:center">无</div>
<div class="c" style="left:1814.5px;top:678.72px;width:72.0px;height:108.58px;text-align:center"></div>
<div class="c" style="left:1886.5px;top:678.72px;width:82.0px;height:108.58px;text-align:center">有线IP</div>
<div class="c" style="left:1968.5px;top:678.72px;width:45.0px;height:108.58px;text-align:center"></div>
<div class="c" style="left:2013.5px;top:678.72px;width:44.5px;height:108.58px;text-align:center">是</div>
<div class="c" style="left:2058px;top:678.72px;width:44.5px;height:108.58px;text-align:center">开<br>启</div>
<div class="c" style="left:2102.5px;top:678.72px;width:47.0px;height:108.58px;text-align:center">80</div>
<div class="c" style="left:2149.5px;top:678.72px;width:163.0px;height:108.58px;text-align:center">45.116.153.251</div>
<div class="c" style="left:2312.5px;top:678.72px;width:81.5px;height:108.58px;text-align:center">60094</div>
<div class="c" style="left:2394px;top:678.72px;width:44.5px;height:108.58px;text-align:center"></div>
<div class="c" style="left:2438.5px;top:678.72px;width:44.0px;height:108.58px;text-align:center"></div>
<div class="c" style="left:2482.5px;top:678.72px;width:52.5px;height:108.58px"></div>
<svg class="a" style="left:2493px;top:686.72px" width="34" height="60" viewBox="0 0 34 60"><circle cx="13.75" cy="17" r="8" stroke="#337ab7" stroke-width="4" fill="none"/><path d="M13.75 12.5 V21.5 M9.25 17 H18.25" stroke="#337ab7" stroke-width="1.6"/><path d="M20.3 23.6 L26.3 29.6" stroke="#337ab7" stroke-width="3.6" stroke-linecap="round"/><g transform="translate(7.5 54.5) rotate(-45)"><path d="M0 0 L3.9 -3.9 L19.6 -3.9 L19.6 3.9 L3.9 3.9 Z" fill="#337ab7"/><rect x="20.6" y="-3.9" width="6.6" height="7.8" rx="1.6" fill="#337ab7"/><path d="M6.5 -1.6 H18" stroke="#cfe0f0" stroke-width="0.7"/><path d="M1.6 0.2 L3.6 -0.6 L4.2 1.6 L2.6 2.4 Z" fill="#fff"/></g></svg>
<div class="a" style="left:645px;top:787.30px;width:1890px;height:80.72px;background:#f4f4f5;border-bottom:1px solid #ddd"></div>
<div class="cb" style="left:660px;top:807.30px"></div>
<div class="a" style="left:645px;top:787.30px;width:1px;height:80.72px;background:#ddd"></div>
<div class="a" style="left:693px;top:787.30px;width:1px;height:80.72px;background:#ddd"></div>
<div class="c" style="left:693px;top:787.30px;width:66px;height:80.72px;text-align:center">IP终<br>端</div>
<div class="c" style="left:759px;top:787.30px;width:187.5px;height:80.72px;text-align:center">015-001-03378-<br>20210721-04236</div>
<div class="c" style="left:946.5px;top:787.30px;width:141.5px;height:80.72px;text-align:left">[ <span style="color:#0000ee">空闲</span>] 08巨<br>宝庄镇洪字村</div>
<div class="c" style="left:1088px;top:787.30px;width:137px;height:80.72px"></div>
<div class="a" style="left:1101px;top:800.30px;width:105px;height:37px;background:#fff;border:1px solid #767676;border-radius:3px"></div>
<div class="c" style="left:1225px;top:787.30px;width:281.5px;height:80.72px;text-align:center">42302850000000314000459</div>
<div class="c" style="left:1506.5px;top:787.30px;width:77.0px;height:80.72px;text-align:center"></div>
<div class="c" style="left:1583.5px;top:787.30px;width:77.0px;height:80.72px;text-align:center"></div>
<div class="c" style="left:1660.5px;top:787.30px;width:77.0px;height:80.72px;text-align:center"></div>
<div class="c" style="left:1737.5px;top:787.30px;width:77.0px;height:80.72px;text-align:center">无</div>
<div class="c" style="left:1814.5px;top:787.30px;width:72.0px;height:80.72px;text-align:center"></div>
<div class="c" style="left:1886.5px;top:787.30px;width:82.0px;height:80.72px;text-align:center">有线IP</div>
<div class="c" style="left:1968.5px;top:787.30px;width:45.0px;height:80.72px;text-align:center"></div>
<div class="c" style="left:2013.5px;top:787.30px;width:44.5px;height:80.72px;text-align:center">是</div>
<div class="c" style="left:2058px;top:787.30px;width:44.5px;height:80.72px;text-align:center">开<br>启</div>
<div class="c" style="left:2102.5px;top:787.30px;width:47.0px;height:80.72px;text-align:center">80</div>
<div class="c" style="left:2149.5px;top:787.30px;width:163.0px;height:80.72px;text-align:center">1.25.46.48</div>
<div class="c" style="left:2312.5px;top:787.30px;width:81.5px;height:80.72px;text-align:center">1120</div>
<div class="c" style="left:2394px;top:787.30px;width:44.5px;height:80.72px;text-align:center"></div>
<div class="c" style="left:2438.5px;top:787.30px;width:44.0px;height:80.72px;text-align:center"></div>
<div class="c" style="left:2482.5px;top:787.30px;width:52.5px;height:80.72px"></div>
<svg class="a" style="left:2493px;top:795.30px" width="34" height="60" viewBox="0 0 34 60"><circle cx="13.75" cy="17" r="8" stroke="#337ab7" stroke-width="4" fill="none"/><path d="M13.75 12.5 V21.5 M9.25 17 H18.25" stroke="#337ab7" stroke-width="1.6"/><path d="M20.3 23.6 L26.3 29.6" stroke="#337ab7" stroke-width="3.6" stroke-linecap="round"/><g transform="translate(7.5 54.5) rotate(-45)"><path d="M0 0 L3.9 -3.9 L19.6 -3.9 L19.6 3.9 L3.9 3.9 Z" fill="#337ab7"/><rect x="20.6" y="-3.9" width="6.6" height="7.8" rx="1.6" fill="#337ab7"/><path d="M6.5 -1.6 H18" stroke="#cfe0f0" stroke-width="0.7"/><path d="M1.6 0.2 L3.6 -0.6 L4.2 1.6 L2.6 2.4 Z" fill="#fff"/></g></svg>
<div class="a" style="left:645px;top:868.02px;width:1890px;height:80.72px;background:#e6e7ea;border-bottom:1px solid #ddd"></div>
<div class="cb" style="left:660px;top:888.02px"></div>
<div class="a" style="left:645px;top:868.02px;width:1px;height:80.72px;background:#ddd"></div>
<div class="a" style="left:693px;top:868.02px;width:1px;height:80.72px;background:#ddd"></div>
<div class="c" style="left:693px;top:868.02px;width:66px;height:80.72px;text-align:center">IP终<br>端</div>
<div class="c" style="left:759px;top:868.02px;width:187.5px;height:80.72px;text-align:center">015-001-03378-<br>20220913-04850</div>
<div class="c" style="left:946.5px;top:868.02px;width:141.5px;height:80.72px;text-align:left">[ <span style="color:#0000ee">空闲</span>] 红旗3</div>
<div class="c" style="left:1088px;top:868.02px;width:137px;height:80.72px"></div>
<div class="a" style="left:1101px;top:881.02px;width:105px;height:37px;background:#fff;border:1px solid #767676;border-radius:3px"></div>
<div class="c" style="left:1225px;top:868.02px;width:281.5px;height:80.72px;text-align:center">62302212042000314000402</div>
<div class="c" style="left:1506.5px;top:868.02px;width:77.0px;height:80.72px;text-align:center"></div>
<div class="c" style="left:1583.5px;top:868.02px;width:77.0px;height:80.72px;text-align:center"></div>
<div class="c" style="left:1660.5px;top:868.02px;width:77.0px;height:80.72px;text-align:center"></div>
<div class="c" style="left:1737.5px;top:868.02px;width:77.0px;height:80.72px;text-align:center">中国<br>移动</div>
<div class="c" style="left:1814.5px;top:868.02px;width:72.0px;height:80.72px;text-align:center"></div>
<div class="c" style="left:1886.5px;top:868.02px;width:82.0px;height:80.72px;text-align:center">3G/4G</div>
<div class="c" style="left:1968.5px;top:868.02px;width:45.0px;height:80.72px;text-align:center"></div>
<div class="c" style="left:2013.5px;top:868.02px;width:44.5px;height:80.72px;text-align:center">是</div>
<div class="c" style="left:2058px;top:868.02px;width:44.5px;height:80.72px;text-align:center">开<br>启</div>
<div class="c" style="left:2102.5px;top:868.02px;width:47.0px;height:80.72px;text-align:center">80</div>
<div class="c" style="left:2149.5px;top:868.02px;width:163.0px;height:80.72px;text-align:center">36.156.170.171</div>
<div class="c" style="left:2312.5px;top:868.02px;width:81.5px;height:80.72px;text-align:center">3064</div>
<div class="c" style="left:2394px;top:868.02px;width:44.5px;height:80.72px;text-align:center"></div>
<div class="c" style="left:2438.5px;top:868.02px;width:44.0px;height:80.72px;text-align:center"></div>
<div class="c" style="left:2482.5px;top:868.02px;width:52.5px;height:80.72px"></div>
<svg class="a" style="left:2493px;top:876.02px" width="34" height="60" viewBox="0 0 34 60"><circle cx="13.75" cy="17" r="8" stroke="#337ab7" stroke-width="4" fill="none"/><path d="M13.75 12.5 V21.5 M9.25 17 H18.25" stroke="#337ab7" stroke-width="1.6"/><path d="M20.3 23.6 L26.3 29.6" stroke="#337ab7" stroke-width="3.6" stroke-linecap="round"/><g transform="translate(7.5 54.5) rotate(-45)"><path d="M0 0 L3.9 -3.9 L19.6 -3.9 L19.6 3.9 L3.9 3.9 Z" fill="#337ab7"/><rect x="20.6" y="-3.9" width="6.6" height="7.8" rx="1.6" fill="#337ab7"/><path d="M6.5 -1.6 H18" stroke="#cfe0f0" stroke-width="0.7"/><path d="M1.6 0.2 L3.6 -0.6 L4.2 1.6 L2.6 2.4 Z" fill="#fff"/></g></svg>
<div class="a" style="left:645px;top:948.74px;width:1890px;height:80.72px;background:#f9f9f9;border-bottom:1px solid #ddd"></div>
<div class="cb" style="left:660px;top:968.74px"></div>
<div class="a" style="left:645px;top:948.74px;width:1px;height:80.72px;background:#ddd"></div>
<div class="a" style="left:693px;top:948.74px;width:1px;height:80.72px;background:#ddd"></div>
<div class="c" style="left:693px;top:948.74px;width:66px;height:80.72px;text-align:center">IP终<br>端</div>
<div class="c" style="left:759px;top:948.74px;width:187.5px;height:80.72px;text-align:center">015-001-03378-<br>20220913-04873</div>
<div class="c" style="left:946.5px;top:948.74px;width:141.5px;height:80.72px;text-align:left">[ <span style="color:#0000ee">空闲</span>] 靠山<br>村桥西11队</div>
<div class="c" style="left:1088px;top:948.74px;width:137px;height:80.72px"></div>
<div class="a" style="left:1101px;top:961.74px;width:105px;height:37px;background:#fff;border:1px solid #767676;border-radius:3px"></div>
<div class="c" style="left:1225px;top:948.74px;width:281.5px;height:80.72px;text-align:center">62302212012040314000408</div>
<div class="c" style="left:1506.5px;top:948.74px;width:77.0px;height:80.72px;text-align:center"></div>
<div class="c" style="left:1583.5px;top:948.74px;width:77.0px;height:80.72px;text-align:center"></div>
<div class="c" style="left:1660.5px;top:948.74px;width:77.0px;height:80.72px;text-align:center"></div>
<div class="c" style="left:1737.5px;top:948.74px;width:77.0px;height:80.72px;text-align:center">中国<br>移动</div>
<div class="c" style="left:1814.5px;top:948.74px;width:72.0px;height:80.72px;text-align:center"></div>
<div class="c" style="left:1886.5px;top:948.74px;width:82.0px;height:80.72px;text-align:center">3G/4G</div>
<div class="c" style="left:1968.5px;top:948.74px;width:45.0px;height:80.72px;text-align:center"></div>
<div class="c" style="left:2013.5px;top:948.74px;width:44.5px;height:80.72px;text-align:center">是</div>
<div class="c" style="left:2058px;top:948.74px;width:44.5px;height:80.72px;text-align:center">开<br>启</div>
<div class="c" style="left:2102.5px;top:948.74px;width:47.0px;height:80.72px;text-align:center">60</div>
<div class="c" style="left:2149.5px;top:948.74px;width:163.0px;height:80.72px;text-align:center">36.156.170.178</div>
<div class="c" style="left:2312.5px;top:948.74px;width:81.5px;height:80.72px;text-align:center">52150</div>
<div class="c" style="left:2394px;top:948.74px;width:44.5px;height:80.72px;text-align:center"></div>
<div class="c" style="left:2438.5px;top:948.74px;width:44.0px;height:80.72px;text-align:center"></div>
<div class="c" style="left:2482.5px;top:948.74px;width:52.5px;height:80.72px"></div>
<svg class="a" style="left:2493px;top:956.74px" width="34" height="60" viewBox="0 0 34 60"><circle cx="13.75" cy="17" r="8" stroke="#337ab7" stroke-width="4" fill="none"/><path d="M13.75 12.5 V21.5 M9.25 17 H18.25" stroke="#337ab7" stroke-width="1.6"/><path d="M20.3 23.6 L26.3 29.6" stroke="#337ab7" stroke-width="3.6" stroke-linecap="round"/><g transform="translate(7.5 54.5) rotate(-45)"><path d="M0 0 L3.9 -3.9 L19.6 -3.9 L19.6 3.9 L3.9 3.9 Z" fill="#337ab7"/><rect x="20.6" y="-3.9" width="6.6" height="7.8" rx="1.6" fill="#337ab7"/><path d="M6.5 -1.6 H18" stroke="#cfe0f0" stroke-width="0.7"/><path d="M1.6 0.2 L3.6 -0.6 L4.2 1.6 L2.6 2.4 Z" fill="#fff"/></g></svg>
<div class="a" style="left:645px;top:1029.46px;width:1890px;height:108.58px;background:#e6e7ea;border-bottom:1px solid #ddd"></div>
<div class="cb" style="left:660px;top:1049.46px"></div>
<div class="a" style="left:645px;top:1029.46px;width:1px;height:108.58px;background:#ddd"></div>
<div class="a" style="left:693px;top:1029.46px;width:1px;height:108.58px;background:#ddd"></div>
<div class="c" style="left:693px;top:1029.46px;width:66px;height:108.58px;text-align:center">IP终<br>端</div>
<div class="c" style="left:759px;top:1029.46px;width:187.5px;height:108.58px;text-align:center">015-001-03378-<br>20220913-04860</div>
<div class="c" style="left:946.5px;top:1029.46px;width:141.5px;height:108.58px;text-align:left">[ <span style="color:#0000ee">空闲</span>] 靠山<br>村桥西1、6<br>队</div>
<div class="c" style="left:1088px;top:1029.46px;width:137px;height:108.58px"></div>
<div class="a" style="left:1101px;top:1042.46px;width:105px;height:37px;background:#fff;border:1px solid #767676;border-radius:3px"></div>
<div class="c" style="left:1225px;top:1029.46px;width:281.5px;height:108.58px;text-align:center">62302212012040314000409</div>
<div class="c" style="left:1506.5px;top:1029.46px;width:77.0px;height:108.58px;text-align:center"></div>
<div class="c" style="left:1583.5px;top:1029.46px;width:77.0px;height:108.58px;text-align:center"></div>
<div class="c" style="left:1660.5px;top:1029.46px;width:77.0px;height:108.58px;text-align:center"></div>
<div class="c" style="left:1737.5px;top:1029.46px;width:77.0px;height:108.58px;text-align:center">中国<br>移动</div>
<div class="c" style="left:1814.5px;top:1029.46px;width:72.0px;height:108.58px;text-align:center"></div>
<div class="c" style="left:1886.5px;top:1029.46px;width:82.0px;height:108.58px;text-align:center">3G/4G</div>
<div class="c" style="left:1968.5px;top:1029.46px;width:45.0px;height:108.58px;text-align:center"></div>
<div class="c" style="left:2013.5px;top:1029.46px;width:44.5px;height:108.58px;text-align:center">是</div>
<div class="c" style="left:2058px;top:1029.46px;width:44.5px;height:108.58px;text-align:center">开<br>启</div>
<div class="c" style="left:2102.5px;top:1029.46px;width:47.0px;height:108.58px;text-align:center">60</div>
<div class="c" style="left:2149.5px;top:1029.46px;width:163.0px;height:108.58px;text-align:center">36.156.170.186</div>
<div class="c" style="left:2312.5px;top:1029.46px;width:81.5px;height:108.58px;text-align:center">4955</div>
<div class="c" style="left:2394px;top:1029.46px;width:44.5px;height:108.58px;text-align:center"></div>
<div class="c" style="left:2438.5px;top:1029.46px;width:44.0px;height:108.58px;text-align:center"></div>
<div class="c" style="left:2482.5px;top:1029.46px;width:52.5px;height:108.58px"></div>
<svg class="a" style="left:2493px;top:1037.46px" width="34" height="60" viewBox="0 0 34 60"><circle cx="13.75" cy="17" r="8" stroke="#337ab7" stroke-width="4" fill="none"/><path d="M13.75 12.5 V21.5 M9.25 17 H18.25" stroke="#337ab7" stroke-width="1.6"/><path d="M20.3 23.6 L26.3 29.6" stroke="#337ab7" stroke-width="3.6" stroke-linecap="round"/><g transform="translate(7.5 54.5) rotate(-45)"><path d="M0 0 L3.9 -3.9 L19.6 -3.9 L19.6 3.9 L3.9 3.9 Z" fill="#337ab7"/><rect x="20.6" y="-3.9" width="6.6" height="7.8" rx="1.6" fill="#337ab7"/><path d="M6.5 -1.6 H18" stroke="#cfe0f0" stroke-width="0.7"/><path d="M1.6 0.2 L3.6 -0.6 L4.2 1.6 L2.6 2.4 Z" fill="#fff"/></g></svg>
<div class="a" style="left:645px;top:1138.04px;width:1890px;height:108.58px;background:#f9f9f9;border-bottom:1px solid #ddd"></div>
<div class="cb" style="left:660px;top:1158.04px"></div>
<div class="a" style="left:645px;top:1138.04px;width:1px;height:108.58px;background:#ddd"></div>
<div class="a" style="left:693px;top:1138.04px;width:1px;height:108.58px;background:#ddd"></div>
<div class="c" style="left:693px;top:1138.04px;width:66px;height:108.58px;text-align:center">IP终<br>端</div>
<div class="c" style="left:759px;top:1138.04px;width:187.5px;height:108.58px;text-align:center">015-001-03378-<br>20220913-04852</div>
<div class="c" style="left:946.5px;top:1138.04px;width:141.5px;height:108.58px;text-align:left">[ <span style="color:#0000ee">空闲</span>] 靠山<br>村桥西3、10<br>队</div>
<div class="c" style="left:1088px;top:1138.04px;width:137px;height:108.58px"></div>
<div class="a" style="left:1101px;top:1151.04px;width:105px;height:37px;background:#fff;border:1px solid #767676;border-radius:3px"></div>
<div class="c" style="left:1225px;top:1138.04px;width:281.5px;height:108.58px;text-align:center">62302212012040314000410</div>
<div class="c" style="left:1506.5px;top:1138.04px;width:77.0px;height:108.58px;text-align:center"></div>
<div class="c" style="left:1583.5px;top:1138.04px;width:77.0px;height:108.58px;text-align:center"></div>
<div class="c" style="left:1660.5px;top:1138.04px;width:77.0px;height:108.58px;text-align:center"></div>
<div class="c" style="left:1737.5px;top:1138.04px;width:77.0px;height:108.58px;text-align:center">中国<br>移动</div>
<div class="c" style="left:1814.5px;top:1138.04px;width:72.0px;height:108.58px;text-align:center"></div>
<div class="c" style="left:1886.5px;top:1138.04px;width:82.0px;height:108.58px;text-align:center">3G/4G</div>
<div class="c" style="left:1968.5px;top:1138.04px;width:45.0px;height:108.58px;text-align:center"></div>
<div class="c" style="left:2013.5px;top:1138.04px;width:44.5px;height:108.58px;text-align:center">是</div>
<div class="c" style="left:2058px;top:1138.04px;width:44.5px;height:108.58px;text-align:center">开<br>启</div>
<div class="c" style="left:2102.5px;top:1138.04px;width:47.0px;height:108.58px;text-align:center">60</div>
<div class="c" style="left:2149.5px;top:1138.04px;width:163.0px;height:108.58px;text-align:center">36.156.170.185</div>
<div class="c" style="left:2312.5px;top:1138.04px;width:81.5px;height:108.58px;text-align:center">4940</div>
<div class="c" style="left:2394px;top:1138.04px;width:44.5px;height:108.58px;text-align:center"></div>
<div class="c" style="left:2438.5px;top:1138.04px;width:44.0px;height:108.58px;text-align:center"></div>
<div class="c" style="left:2482.5px;top:1138.04px;width:52.5px;height:108.58px"></div>
<svg class="a" style="left:2493px;top:1146.04px" width="34" height="60" viewBox="0 0 34 60"><circle cx="13.75" cy="17" r="8" stroke="#337ab7" stroke-width="4" fill="none"/><path d="M13.75 12.5 V21.5 M9.25 17 H18.25" stroke="#337ab7" stroke-width="1.6"/><path d="M20.3 23.6 L26.3 29.6" stroke="#337ab7" stroke-width="3.6" stroke-linecap="round"/><g transform="translate(7.5 54.5) rotate(-45)"><path d="M0 0 L3.9 -3.9 L19.6 -3.9 L19.6 3.9 L3.9 3.9 Z" fill="#337ab7"/><rect x="20.6" y="-3.9" width="6.6" height="7.8" rx="1.6" fill="#337ab7"/><path d="M6.5 -1.6 H18" stroke="#cfe0f0" stroke-width="0.7"/><path d="M1.6 0.2 L3.6 -0.6 L4.2 1.6 L2.6 2.4 Z" fill="#fff"/></g></svg>
<div class="a" style="left:645px;top:1246.62px;width:1890px;height:108.58px;background:#e6e7ea;border-bottom:1px solid #ddd"></div>
<div class="cb" style="left:660px;top:1266.62px"></div>
<div class="a" style="left:645px;top:1246.62px;width:1px;height:108.58px;background:#ddd"></div>
<div class="a" style="left:693px;top:1246.62px;width:1px;height:108.58px;background:#ddd"></div>
<div class="c" style="left:693px;top:1246.62px;width:66px;height:108.58px;text-align:center">IP终<br>端</div>
<div class="c" style="left:759px;top:1246.62px;width:187.5px;height:108.58px;text-align:center">015-001-03378-<br>20220913-04867</div>
<div class="c" style="left:946.5px;top:1246.62px;width:141.5px;height:108.58px;text-align:left">[ <span style="color:#0000ee">空闲</span>] 靠山<br>村桥西2、7<br>队</div>
<div class="c" style="left:1088px;top:1246.62px;width:137px;height:108.58px"></div>
<div class="a" style="left:1101px;top:1259.62px;width:105px;height:37px;background:#fff;border:1px solid #767676;border-radius:3px"></div>
<div class="c" style="left:1225px;top:1246.62px;width:281.5px;height:108.58px;text-align:center">62302212012040314000400</div>
<div class="c" style="left:1506.5px;top:1246.62px;width:77.0px;height:108.58px;text-align:center"></div>
<div class="c" style="left:1583.5px;top:1246.62px;width:77.0px;height:108.58px;text-align:center"></div>
<div class="c" style="left:1660.5px;top:1246.62px;width:77.0px;height:108.58px;text-align:center"></div>
<div class="c" style="left:1737.5px;top:1246.62px;width:77.0px;height:108.58px;text-align:center">中国<br>移动</div>
<div class="c" style="left:1814.5px;top:1246.62px;width:72.0px;height:108.58px;text-align:center"></div>
<div class="c" style="left:1886.5px;top:1246.62px;width:82.0px;height:108.58px;text-align:center">3G/4G</div>
<div class="c" style="left:1968.5px;top:1246.62px;width:45.0px;height:108.58px;text-align:center"></div>
<div class="c" style="left:2013.5px;top:1246.62px;width:44.5px;height:108.58px;text-align:center">是</div>
<div class="c" style="left:2058px;top:1246.62px;width:44.5px;height:108.58px;text-align:center">开<br>启</div>
<div class="c" style="left:2102.5px;top:1246.62px;width:47.0px;height:108.58px;text-align:center">60</div>
<div class="c" style="left:2149.5px;top:1246.62px;width:163.0px;height:108.58px;text-align:center">36.156.170.178</div>
<div class="c" style="left:2312.5px;top:1246.62px;width:81.5px;height:108.58px;text-align:center">52161</div>
<div class="c" style="left:2394px;top:1246.62px;width:44.5px;height:108.58px;text-align:center"></div>
<div class="c" style="left:2438.5px;top:1246.62px;width:44.0px;height:108.58px;text-align:center"></div>
<div class="c" style="left:2482.5px;top:1246.62px;width:52.5px;height:108.58px"></div>
<svg class="a" style="left:2493px;top:1254.62px" width="34" height="60" viewBox="0 0 34 60"><circle cx="13.75" cy="17" r="8" stroke="#337ab7" stroke-width="4" fill="none"/><path d="M13.75 12.5 V21.5 M9.25 17 H18.25" stroke="#337ab7" stroke-width="1.6"/><path d="M20.3 23.6 L26.3 29.6" stroke="#337ab7" stroke-width="3.6" stroke-linecap="round"/><g transform="translate(7.5 54.5) rotate(-45)"><path d="M0 0 L3.9 -3.9 L19.6 -3.9 L19.6 3.9 L3.9 3.9 Z" fill="#337ab7"/><rect x="20.6" y="-3.9" width="6.6" height="7.8" rx="1.6" fill="#337ab7"/><path d="M6.5 -1.6 H18" stroke="#cfe0f0" stroke-width="0.7"/><path d="M1.6 0.2 L3.6 -0.6 L4.2 1.6 L2.6 2.4 Z" fill="#fff"/></g></svg>
<div class="a" style="left:345px;top:1348px;width:2214px;height:4px;background:#f4f4f4"></div>
<div class="a" style="left:2535px;top:176px;width:23px;height:1172px;background:#fafafa"></div>
<div class="a" style="left:2539px;top:183px;width:0;height:0;border-left:7.5px solid transparent;border-right:7.5px solid transparent;border-bottom:10px solid #8c8c8c"></div>
<div class="a" style="left:2540px;top:203px;width:13px;height:581px;background:#8c8c8c;border-radius:7px"></div>
<div class="a" style="left:2539px;top:1332px;width:0;height:0;border-left:7.5px solid transparent;border-right:7.5px solid transparent;border-top:10px solid #8c8c8c"></div>
<div class="a" style="left:0;top:1352px;width:2559px;height:46px;background:#1c87c0"></div>
<div class="t" style="left:1064px;top:1360px;font-size:18px;line-height:26px;color:#fff">黑龙江村村响广播器材有限公司 版权所有©2014- 2025</div>
<div class="a" style="left:2280px;top:1359px;width:279px;height:38px;background:linear-gradient(#d5dce3 0,#fff 2.5px,#fff 35.5px,#c5d0dc 38px)"></div>
<svg class="a" style="left:2250px;top:1345px" width="60" height="53" viewBox="0 0 60 53"><defs><linearGradient id="og" x1="1" y1="0" x2="0" y2="1"><stop offset="0" stop-color="#fa7443"/><stop offset="1" stop-color="#ec4508"/></linearGradient></defs><rect x="10.5" y="11.9" width="38.2" height="38.2" rx="5" transform="rotate(-14 29.6 31)" fill="url(#og)"/><path d="M43 19 L27 19 C17 19 14.2 23 15.2 26.5 C16.5 30 21 30 27 30 L36 30 C44 30 46.8 34 45.2 37.5 C43.2 41.8 36 42.2 30 42.2 L17.5 42.2" stroke="#fff" stroke-width="5.6" fill="none"/></svg>
<svg class="a" style="left:2300px;top:1355px" width="259" height="43" viewBox="0 0 259 43"><g fill="#0a6fdb" stroke="none"><path d="M14 15.8 h20.9 v12 h-20.9 z M16.8 18.5 v6.6 h15.3 v-6.6 z" fill-rule="evenodd"/><rect x="15.4" y="15.8" width="18.1" height="12" rx="3.2" fill="none" stroke="#0a6fdb" stroke-width="2.8"/></g><path d="M24.5 12.5 L24.5 34" stroke="#0a6fdb" stroke-width="2.8"/><path d="M23.1 13.6 L24.5 12 L25.9 13.6 Z M23.1 32.9 L24.5 34.5 L25.9 32.9 Z" fill="#0a6fdb"/><circle cx="56.6" cy="19.6" r="2.5" stroke="#0a6fdb" stroke-width="2.2" fill="none"/><circle cx="66.6" cy="24.6" r="2.9" fill="#0a6fdb"/><path d="M69.4 24.8 Q69.2 29.5 64.2 32.2 Q66.5 29 65.4 26.6 Z" fill="#0a6fdb"/><rect x="92" y="11.7" width="8.8" height="14.3" rx="4.4" fill="#0a6fdb"/><path d="M89.6 22 Q89.6 30.4 96.4 30.4 Q103.2 30.4 103.2 22" stroke="#0a6fdb" stroke-width="2.2" fill="none"/><rect x="93.8" y="33" width="5.2" height="2" rx="1" fill="#0a6fdb"/><rect x="122.2" y="15" width="21.7" height="17" rx="2.5" fill="#0a6fdb"/><g fill="#fff"><rect x="124.9" y="17.3" width="2.9" height="3.2"/><rect x="129.3" y="17.3" width="3.2" height="3.2"/><rect x="134" y="17.3" width="2.8" height="3.2"/><rect x="138.5" y="17.3" width="3.2" height="3.2"/><rect x="124.9" y="22.3" width="2.9" height="2.7"/><rect x="129.3" y="22.3" width="3.2" height="2.7"/><rect x="134" y="22.3" width="2.8" height="2.7"/><rect x="138.5" y="22.3" width="3.2" height="2.7"/><rect x="124.9" y="26.4" width="4.6" height="3.2"/><rect x="131" y="26.4" width="10.7" height="3.2"/></g></svg>
<svg class="a" style="left:2440px;top:1350px" width="119" height="48" viewBox="0 0 119 48"><defs><linearGradient id="sg" x1="0" y1="0" x2="1" y2="1"><stop offset="0" stop-color="#ff5522"/><stop offset=".55" stop-color="#a77bfb"/><stop offset="1" stop-color="#55e8ff"/></linearGradient></defs><path d="M17 20.5 L22 19 L24 21.5 L31 21.5 L33.5 19 L39 21 L39 27 L35.5 27.5 L35.5 38 L22 38 L21.5 27.5 L17 27.5 Z" fill="url(#sg)"/><circle cx="39.6" cy="15.3" r="4.3" fill="#ff522a"/><g fill="#0a6fdb"><path d="M58.8 23 Q55.8 23 55.8 20 Q55.8 19.8 55.8 23.5 L55.8 20 Q55.8 20 59 20 L64.2 20 L64.2 28 L59 28 Q55.8 28 55.8 25 Z"/><rect x="55.8" y="19.8" width="8.4" height="8.2" rx="3"/><path d="M66 20 h5.5 q3.6 0 3.6 3.6 v4.4 h-9.1 z M69 23 v2.4 h2.5 v-2.4 z" fill-rule="evenodd"/><rect x="55.8" y="30" width="8.4" height="8.8" rx="3"/><rect x="66" y="30" width="9.1" height="8.8" rx="3.2"/></g><circle cx="99.5" cy="27" r="14.6" fill="#fdfdfd" stroke="#f1e6ee" stroke-width="0.8"/><path d="M88.5 17 Q91 12 94 13.5 Q97 15.5 99.5 15 Q102.5 15 105 13 Q108 12 110 17" fill="#fdfdfd" stroke="#ebe6f6" stroke-width="0.7"/><path d="M87 26 Q97 21 107 21.5 L107.5 27.5 Q97 27 88 30.5 Z" fill="#f07a30"/><ellipse cx="91.5" cy="27.5" rx="1.1" ry="1.9" fill="#111"/><path d="M99.5 26 L102 24.8" stroke="#222" stroke-width="1"/><ellipse cx="95" cy="31.5" rx="3.2" ry="1.6" fill="#222" transform="rotate(-12 95 31.5)"/><path d="M99.5 34.5 Q102.5 33.5 103.5 31" stroke="#333" stroke-width="0.9" fill="none"/><path d="M113 18.5 Q113.8 22.6 117.5 23.3 Q113.8 24 113 28 Q112.2 24 108.5 23.3 Q112.2 22.6 113 18.5 Z" fill="#f8e23c"/></svg>
</body></html>
